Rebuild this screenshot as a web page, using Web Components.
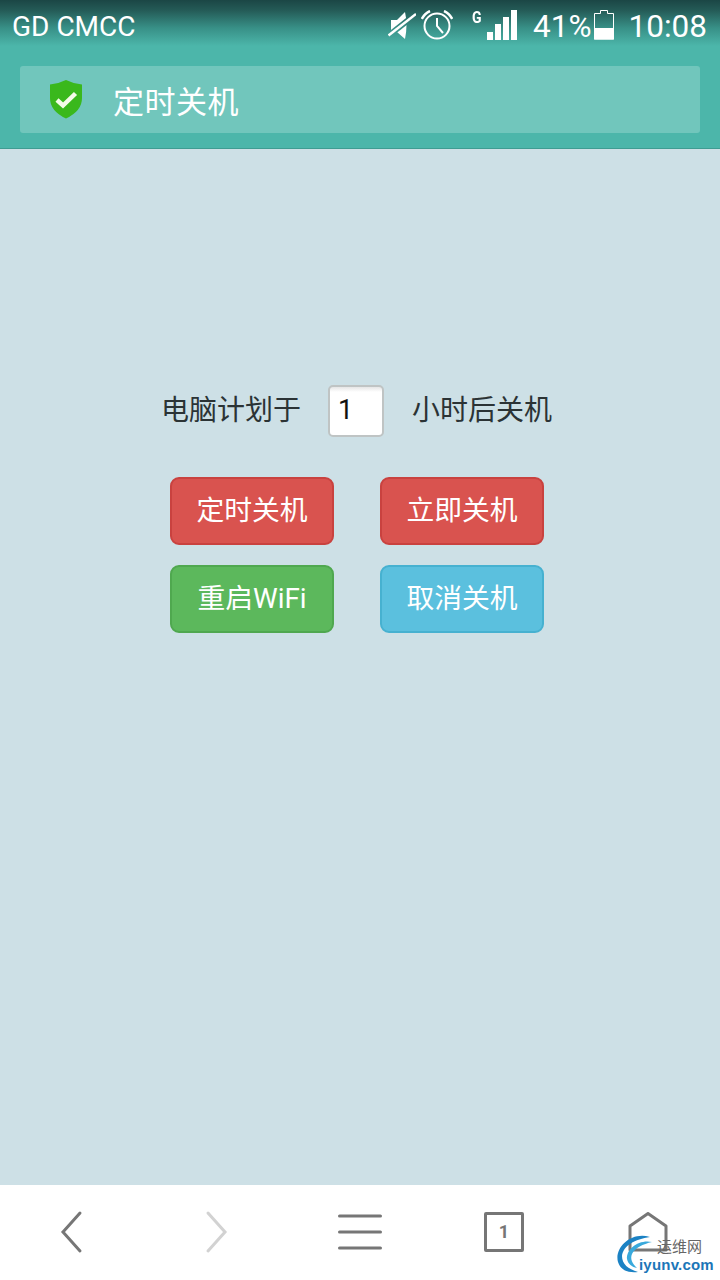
<!DOCTYPE html>
<html>
<head>
<meta charset="utf-8">
<style>
	html, body { margin: 0; padding: 0; height: 100%; }
	body { font-family: "Roboto", "Noto Sans CJK SC", sans-serif; }
</style>
</head>
<body>
<app-screen>
	<status-bar slot="top"></status-bar>
	<title-bar slot="top" title="定时关机"></title-bar>
	<shutdown-form></shutdown-form>
	<nav-bar slot="bottom"></nav-bar>
</app-screen>

<script>
const cjk = `"Noto Sans CJK SC", sans-serif`;

class appScreen extends HTMLElement {
	constructor() {
		super();
		this.attachShadow({mode:'open'}).innerHTML = `
			<style>
				:host { display: flex; flex-direction: column; width: 720px; height: 1280px; overflow: hidden; background-color: #cde0e6; }
				#top { background-color: #4cb6aa; border-bottom: 1px solid #3f9c92; height: 148px; flex: none; }
				#middle { flex: 1; }
				#bottom { flex: none; }
			</style>
			<div id="top"><slot name="top"></slot></div>
			<div id="middle"><slot></slot></div>
			<div id="bottom"><slot name="bottom"></slot></div>
		`;
	}
}

class statusBar extends HTMLElement {
	constructor() {
		super();
		this.attachShadow({mode:'open'}).innerHTML = `
			<style>
				:host {
					display: flex; align-items: flex-start; height: 52px; box-sizing: border-box;
					padding: 9px 13px 0 12px; color: #fff; font: 28px/35px "Roboto", sans-serif;
					background: linear-gradient(#1b4645 0, #245a56 10px, #389087 28px, #4cb6aa 46px);
				}
				#carrier { flex: 1; }
				svg { display: block; flex: none; }
				#mute { margin: 1px 5px 0 0; }
				#alarm { margin: 1px 19px 0 0; }
				#g {
					width: 15px; flex: none; margin-top: 1px; font: 700 16.500px/16px "Roboto", sans-serif;
					transform: scaleX(0.850); transform-origin: left top;
				}
				#signal { margin: 1px 16px 0 0; }
				#pct, #time { font-size: 31.500px; }
				#pct { margin-right: 2px; }
				#battery { margin: 1px 15px 0 0; }
			</style>
			<div id="carrier">GD CMCC</div>
			<svg id="mute" width="28" height="30" viewBox="0 0 28 30">
				<mask id="cut">
					<rect width="28" height="30" fill="#fff"/>
					<path d="M0 26 L28 4" stroke="#000" stroke-width="6"/>
				</mask>
				<path d="M3 10 H9 L17 2 Q20 15 17 29 L9 22 H3 Z" fill="#fff" mask="url(#cut)"/>
				<path d="M0.500 25.500 L28 4" stroke="#fff" stroke-width="2.500"/>
			</svg>
			<svg id="alarm" width="32" height="30" viewBox="0 0 32 30" fill="none" stroke="#fff">
				<circle cx="16" cy="16" r="12.500" stroke-width="2"/>
				<path d="M16 8 V16 L22 23" stroke-width="2"/>
				<path d="M0.800 9 Q3.500 3.500 9 1 M31.200 9 Q28.500 3.500 23 1" stroke-width="2.500"/>
			</svg>
			<div id="g">G</div>
			<svg id="signal" width="30" height="30" viewBox="15 0 30 30" fill="#fff">
				<rect x="15" y="22" width="6" height="8"/>
				<rect x="23" y="14" width="6" height="16"/>
				<rect x="31" y="7" width="6" height="23"/>
				<rect x="39" y="0" width="6" height="30"/>
			</svg>
			<div id="pct">41%</div>
			<svg id="battery" width="20" height="30" viewBox="0 0 20 30">
				<path d="M6.500 0.500 H13.500 V3.500 H19.500 V29 H0.500 V3.500 H6.500 Z" fill="none" stroke="#fff"/>
				<rect x="0" y="18" width="20" height="11.500" fill="#fff"/>
			</svg>
			<div id="time">10:08</div>
		`;
	}
}

class titleBar extends HTMLElement {
	constructor() {
		super();
		const title = this.getAttribute('title');
		this.attachShadow({mode:'open'}).innerHTML = `
			<style>
				:host { display: block; padding: 14px 20px 0 20px; }
				#box {
					display: flex; align-items: center; height: 67px; padding-left: 29px;
					background-color: #71c6bc; border-radius: 3px;
				}
				svg { display: block; margin-right: 30px; }
				span { color: #fff; font: 31px/1 ${cjk}; letter-spacing: 0.500px; }
			</style>
			<div id="box">
				<svg width="34" height="39" viewBox="0 0 34 39">
					<path d="M17 0 Q25 4 33 4.500 V18 Q33 31 17 38.500 Q1 31 1 18 V4.500 Q9 4 17 0 Z" fill="#3ab81c"/>
					<path d="M8 20 L14 25.500 L26.500 13.500" fill="none" stroke="#f4fbe8" stroke-width="4.500"/>
				</svg>
				<span>${title}</span>
			</div>
		`;
	}
}

class shutdownForm extends HTMLElement {
	constructor() {
		super();
		this.attachShadow({mode:'open'}).innerHTML = `
			<style>
				:host { display: block; padding-top: 236px; font: 28px/1 ${cjk}; color: #2b3335; }
				#row { display: flex; align-items: center; height: 52px; padding-left: 161px; }
				#row span { white-space: nowrap; position: relative; top: -3px; }
				#hours {
					box-sizing: border-box; width: 56px; height: 52px; margin: 0 28px 0 27px; padding: 4px 0 0 8px;
					background: linear-gradient(#e6e6e6 0, #fff 5px); border: 2px solid #bfc4c4; border-radius: 5px;
					color: #111; font: 27px/38px "Roboto", sans-serif;
				}
				#buttons { display: grid; grid-template-columns: 164px 164px; column-gap: 46px; row-gap: 20px; margin: 40px 0 0 170px; }
			</style>
			<div id="row">
				<span>电脑计划于</span>
				<div id="hours">1</div>
				<span>小时后关机</span>
			</div>
			<div id="buttons">
				<form-button color="#d9534f" edge="#c9423f">定时关机</form-button>
				<form-button color="#d9534f" edge="#c9423f">立即关机</form-button>
				<form-button color="#5cb85c" edge="#4fa84f">重启WiFi</form-button>
				<form-button color="#5bc0de" edge="#46b1d0">取消关机</form-button>
			</div>
		`;
	}
}

class formButton extends HTMLElement {
	constructor() {
		super();
		this.attachShadow({mode:'open'}).innerHTML = `
			<style>
				:host {
					display: flex; align-items: center; justify-content: center; box-sizing: border-box; height: 68px;
					border-radius: 9px; color: #fff; font: 27.800px/1 "Roboto", ${cjk};
					background-color: ${this.getAttribute('color')};
					border: 2px solid ${this.getAttribute('edge')};
				}
			</style>
			<slot></slot>
		`;
	}
}

class navBar extends HTMLElement {
	constructor() {
		super();
		this.attachShadow({mode:'open'}).innerHTML = `
			<style>
				:host { display: flex; position: relative; height: 95px; background-color: #fff; }
				.cell { flex: 1; display: flex; align-items: center; justify-content: center; padding-bottom: 2px; }
				svg { display: block; }
				#menu { margin-top: 1px; }
				#tab {
					box-sizing: border-box; width: 40px; height: 40px; border: 3px solid #767676; border-radius: 2px;
					display: flex; align-items: center; justify-content: center;
					color: #767676; font: 700 18px/1 "Roboto", sans-serif;
				}
				#mark { position: absolute; left: 617px; top: 49px; width: 103px; height: 46px; }
				#mark-top { position: absolute; left: 40px; top: 4px; font: 15px/1 ${cjk}; color: #666; }
				#mark-url { position: absolute; left: 22px; top: 23px; font: 700 15px/1 "Liberation Sans", sans-serif; color: #1b76b8; letter-spacing: 0.200px; }
				#mark svg { position: absolute; left: 0; top: 0; }
			</style>
			<div class="cell">
				<svg width="24" height="44" viewBox="0 0 24 44" fill="none" stroke="#767676" stroke-width="3" stroke-linecap="round"><path d="M20 3 L3 22 L20 41"/></svg>
			</div>
			<div class="cell">
				<svg width="24" height="44" viewBox="0 0 24 44" fill="none" stroke="#d2d2d2" stroke-width="3" stroke-linecap="round"><path d="M4 3 L21 22 L4 41"/></svg>
			</div>
			<div class="cell">
				<svg id="menu" width="44" height="36" viewBox="0 0 44 36" fill="none" stroke="#767676" stroke-width="3" stroke-linecap="round"><path d="M1.500 2 H42.500 M1.500 18 H42.500 M1.500 34 H42.500"/></svg>
			</div>
			<div class="cell"><div id="tab">1</div></div>
			<div class="cell">
				<svg width="40" height="40" viewBox="0 0 40 40" fill="none" stroke="#767676" stroke-width="3" stroke-linejoin="round"><path d="M20 1.500 L38 14 V38 H2 V14 Z"/></svg>
			</div>
			<div id="mark">
				<svg width="42" height="46" viewBox="0 0 42 46" fill="none">
					<path d="M33 3 C14 -3 -3 14 1 28 C4 37 12 39 21 38 C11 35 5 30 5 22 C6 12 18 5 33 3 Z" fill="#1b82c4"/>
					<path d="M35 8 C22 5 9 15 10 25 C11 30 15 33 20 34 C15 29 13 25 15 20 C18 14 26 10 35 8 Z" fill="#39a9dc"/>
				</svg>
				<span id="mark-top">运维网</span>
				<span id="mark-url">iyunv.com</span>
			</div>
		`;
	}
}

customElements.define("app-screen", appScreen);
customElements.define("status-bar", statusBar);
customElements.define("title-bar", titleBar);
customElements.define("shutdown-form", shutdownForm);
customElements.define("form-button", formButton);
customElements.define("nav-bar", navBar);
</script>
</body>
</html>
